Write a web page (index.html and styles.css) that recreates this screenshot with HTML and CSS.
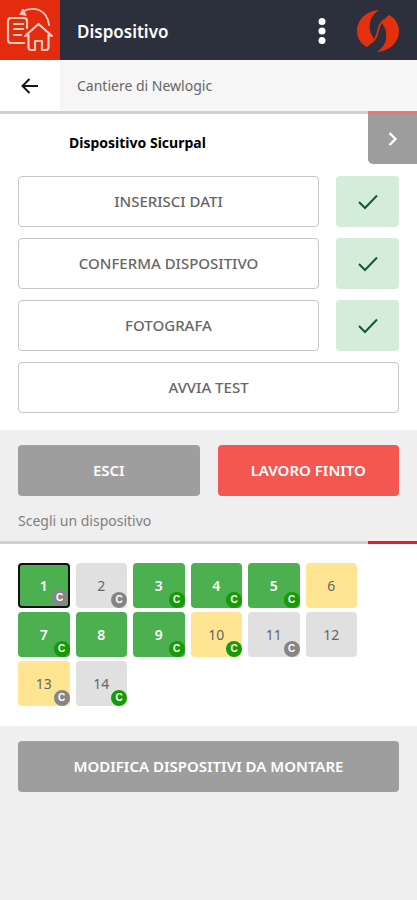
FILE: index.html
```html
<!DOCTYPE html>
<html lang="it">
<head>
<meta charset="utf-8">
<meta name="viewport" content="width=device-width, initial-scale=1">
<title>Dispositivo</title>
<link rel="stylesheet" href="styles.css">
</head>
<body>
<header class="topbar">
  <a class="home" href="#" aria-label="Home">
    <svg width="48" height="48" viewBox="0 0 48 48" fill="none" stroke="#ffc9bd" stroke-width="2.2" stroke-linejoin="round" stroke-linecap="round">
      <path d="M18 37H5Q2 37 2 34V15Q2 12 5 12H18Q21 12 21 15V22"/>
      <path d="M8 18H17M8 23H17M8 29H15"/>
      <path d="M19 30L32.500 18L46 30L42.500 29V41Q42.500 44 40 44H36V35H29V44H25Q22.500 44 22.500 41V29Z"/>
      <path d="M16 6Q24 1 33 4Q42 8 43 19" stroke-width="1.800"/>
      <path d="M14 8L17 3L20 9Z" fill="#ffc9bd" stroke-width="1"/>
    </svg>
  </a>
  <h1 class="topbar-title">Dispositivo</h1>
  <button class="menu" type="button" aria-label="Menu">
    <svg width="8" height="28" viewBox="0 0 8 28" fill="#fff"><circle cx="4" cy="4.500" r="3.500"/><circle cx="4" cy="14" r="3.500"/><circle cx="4" cy="23.500" r="3.500"/></svg>
  </button>
  <svg class="brand" width="42" height="42" viewBox="0 0 42 42" fill="#e5300f">
    <path id="blade" d="M22 0C9 1 0 10 0 21C0 28 4 34 10 37L17 31L16 27C12 22 12 14 14 9C16 5 19 2 22 0Z"/>
    <use href="#blade" transform="rotate(180 21 21)"/>
    <path d="M15 32C20 28 20 25 21 21C22 17 22 14 27 10" fill="none" stroke="#e5300f" stroke-width="1.800"/>
  </svg>
</header>
<nav class="subbar">
  <a class="back" href="#" aria-label="Indietro">
    <svg width="18" height="16" viewBox="0 0 18 16" fill="none" stroke="#151515" stroke-width="2"><path d="M17 8H2M8.500 1L1.500 8L8.500 15"/></svg>
  </a>
  <span class="site">Cantiere di Newlogic</span>
</nav>
<main>
  <section class="panel accent-light">
    <div class="panel-head">
      <h2 class="device-name">Dispositivo Sicurpal</h2>
      <button class="next" type="button" aria-label="Avanti">
        <svg width="10" height="14" viewBox="0 0 10 14" fill="none" stroke="#fff" stroke-width="2.400"><path d="M1.500 1L7.500 7L1.500 13"/></svg>
      </button>
    </div>
    <div class="steps">
      <div class="step"><button class="btn outline" type="button">INSERISCI DATI</button><span class="done"><svg width="20" height="16" viewBox="0 0 20 16"><path d="M1 8L7 14L19 1.500"/></svg></span></div>
      <div class="step"><button class="btn outline" type="button">CONFERMA DISPOSITIVO</button><span class="done"><svg width="20" height="16" viewBox="0 0 20 16"><path d="M1 8L7 14L19 1.500"/></svg></span></div>
      <div class="step"><button class="btn outline" type="button">FOTOGRAFA</button><span class="done"><svg width="20" height="16" viewBox="0 0 20 16"><path d="M1 8L7 14L19 1.500"/></svg></span></div>
      <div class="step"><button class="btn outline" type="button">AVVIA TEST</button></div>
    </div>
  </section>
  <div class="actions">
    <button class="btn gray" type="button">ESCI</button>
    <button class="btn red" type="button">LAVORO FINITO</button>
  </div>
  <p class="hint">Scegli un dispositivo</p>
  <section class="panel accent-red">
    <div class="tiles">
      <button class="tile green selected" type="button">1<span class="badge">C</span></button>
      <button class="tile" type="button">2<span class="badge">C</span></button>
      <button class="tile green" type="button">3<span class="badge ok">C</span></button>
      <button class="tile green" type="button">4<span class="badge ok">C</span></button>
      <button class="tile green" type="button">5<span class="badge ok">C</span></button>
      <button class="tile yellow" type="button">6</button>
      <button class="tile green" type="button">7<span class="badge ok">C</span></button>
      <button class="tile green" type="button">8</button>
      <button class="tile green" type="button">9<span class="badge ok">C</span></button>
      <button class="tile yellow" type="button">10<span class="badge ok">C</span></button>
      <button class="tile" type="button">11<span class="badge">C</span></button>
      <button class="tile" type="button">12</button>
      <button class="tile yellow" type="button">13<span class="badge">C</span></button>
      <button class="tile" type="button">14<span class="badge ok">C</span></button>
    </div>
  </section>
  <div class="actions">
    <button class="btn gray" type="button">MODIFICA DISPOSITIVI DA MONTARE</button>
  </div>
</main>
</body>
</html>
```
FILE: styles.css
```css
* { box-sizing: border-box; }
body {
  margin: 0;
  background: #efefef;
  color: #666;
  font: 14px/20px "Noto Sans", sans-serif;
}
h1, h2, p { margin: 0; }
button { font: inherit; color: inherit; border: 0; padding: 0; cursor: pointer; }
svg { display: block; }

.topbar { display: flex; align-items: center; height: 60px; background: #2b303c; padding-right: 18px; }
.home { display: grid; place-items: center; width: 60px; height: 60px; background: #e32c0e; }
.topbar-title { flex: 1; padding: 3px 0 0 17px; color: #fff; font-size: 17px; line-height: 24px; font-weight: 600; }
.menu { background: none; padding: 2px 4px 0; margin-right: 27px; }
.brand { margin-top: 2px; }

.subbar { display: flex; align-items: center; height: 51px; background: #f6f6f6; }
.back { display: grid; place-items: center; width: 60px; height: 51px; background: #fff; }
.site { padding-left: 17px; }

.panel { position: relative; background: #fff; border-top: 3px solid #d0d0d0; padding-bottom: 17px; }
.panel::before { content: ""; position: absolute; top: -3px; right: 0; width: 49px; height: 3px; background: #f01820; }
.accent-light::before { background: #f8736c; }
.panel-head { display: flex; justify-content: space-between; align-items: flex-start; height: 62px; }
.device-name { padding: 19px 0 0 69px; color: #000; font-size: 14px; line-height: 20px; font-weight: 700; }
.next { display: grid; place-items: center; width: 49px; height: 50px; background: #9d9d9d; border-radius: 0 0 0 5px; }

.steps { display: grid; gap: 11px; padding: 0 18px; }
.step { display: flex; gap: 17px; }
.btn { flex: 1; height: 51px; padding-bottom: 1px; border-radius: 4px; color: #fff; font-size: 15px; font-weight: 600; }
.outline { background: #fff; border: 1px solid #c6c6c6; color: #666; font-weight: 500; }
.gray { background: #9e9e9e; }
.red { background: #f45752; }
.done { display: grid; place-items: center; width: 63px; border-radius: 4px; background: #d4edda; }
.done path { fill: none; stroke: #155a2b; stroke-width: 2px; }

.actions { display: flex; gap: 18px; padding: 15px 18px; }
.hint { padding: 0 18px 10px; color: #808080; }

.tiles { display: grid; grid-template-columns: repeat(6, 1fr); gap: 4px 6px; padding: 19px 60px 3px 18px; }
.tile { position: relative; height: 45px; border-radius: 4px; background: #e0e0e0; }
.green { background: #4caf50; color: #fff; font-weight: 600; }
.yellow { background: #ffe591; }
.selected { border: 2px solid #111; }
.badge {
  position: absolute;
  right: 0;
  bottom: 0;
  width: 16px;
  height: 16px;
  border-radius: 50%;
  background: #858585;
  color: #fff;
  font: 700 10px/16px "Liberation Sans", sans-serif;
}
.ok { background: #169a05; }
```
